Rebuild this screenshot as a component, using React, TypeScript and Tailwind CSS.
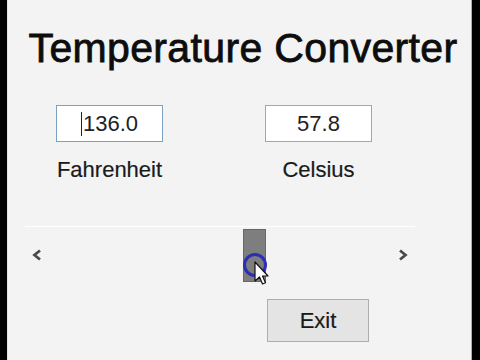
import React from "react";

export default function App() {
  return (
    <div className="w-[480px] h-[360px] bg-black flex font-['Liberation_Sans',Arial,sans-serif] overflow-hidden">
      <div className="w-[7px] shrink-0" />
      <div className="w-[465px] shrink-0 bg-[#f3f3f3] border-l border-r border-l-[#d6e6f2] border-r-[#8fb4cf] flex flex-col">
        <div className="mt-[28px] pl-[7px] h-[41px] text-[41px] leading-[41px] tracking-[0.35px] text-center text-[#0d0d0d] whitespace-nowrap [-webkit-text-stroke:0.8px_#0d0d0d]">
          Temperature Converter
        </div>
        <div className="mt-[36px] ml-[48px] flex gap-[102px]">
          <div className="w-[107px] flex flex-col items-center">
            <div className="w-[107px] h-[37px] border border-[#7ba2c4] bg-white flex items-center justify-center text-[22px] leading-[22px] text-[#222]">
              <span className="w-[1px] h-[24px] bg-[#222] mr-[1px]" />
              <span>136.0</span>
            </div>
            <div className="mt-[17px] text-[22px] leading-[22px] text-[#1a1a1a] whitespace-nowrap [-webkit-text-stroke:0.2px_#1a1a1a]">Fahrenheit</div>
          </div>
          <div className="w-[107px] flex flex-col items-center">
            <div className="w-[107px] h-[37px] border border-[#a6a6a6] bg-white flex items-center justify-center text-[22px] leading-[22px] text-[#222]">
              57.8
            </div>
            <div className="mt-[17px] text-[22px] leading-[22px] text-[#1a1a1a] whitespace-nowrap [-webkit-text-stroke:0.2px_#1a1a1a]">Celsius</div>
          </div>
        </div>
        <div className="mt-[45px] ml-[17px] w-[390px] h-[1px] bg-white" />
        <div className="ml-[17px] w-[390px] h-[56px] flex items-center relative">
          <svg className="ml-[7px] shrink-0" width="10" height="12" viewBox="0 0 10 12">
            <path d="M8 1.5 L2.5 6 L8 10.5" fill="none" stroke="#4a4a4a" strokeWidth="2.8" />
          </svg>
          <div className="ml-[201px] self-start mt-[2px] w-[23px] h-[53px] bg-[#7e7e7e] border border-[#676767] shrink-0" />
          <svg className="ml-auto mr-[7px] shrink-0" width="10" height="12" viewBox="0 0 10 12">
            <path d="M2 1.5 L7.5 6 L2 10.5" fill="none" stroke="#4a4a4a" strokeWidth="2.8" />
          </svg>
          <svg className="absolute left-[216px] top-[25px]" width="34" height="36" viewBox="0 0 34 36">
            <circle cx="14" cy="13" r="10.5" fill="none" stroke="#2e2eb4" strokeWidth="3" />
            <path d="M14 10 L14 29 L18.5 25 L21.5 32 L24.5 30.8 L21.5 24 L27 24 Z" fill="white" stroke="#111" strokeWidth="1.2" strokeLinejoin="round" />
          </svg>
        </div>
        <div className="mt-[16px] ml-[259px] w-[102px] h-[43px] bg-[#e4e4e4] border border-[#adadad] flex items-center justify-center text-[22px] leading-[22px] text-[#1a1a1a] [-webkit-text-stroke:0.2px_#1a1a1a]">
          Exit
        </div>
      </div>
      <div className="w-[8px] shrink-0" />
    </div>
  );
}
